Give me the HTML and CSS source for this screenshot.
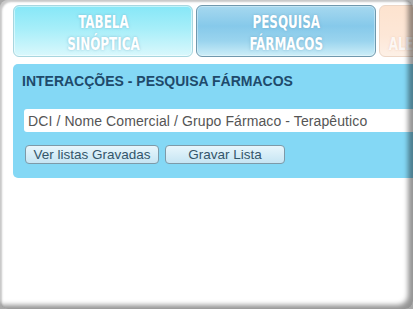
FILE: index.html
```html
<!DOCTYPE html>
<html lang="pt">
<head>
<meta charset="utf-8">
<title>Interacções - Pesquisa Fármacos</title>
<link rel="stylesheet" href="styles.css">
</head>
<body>
<div class="window">
  <div class="content">
    <nav class="tabs">
      <a class="tab tab-synoptic"><span class="tab-label">TABELA<br>SINÓPTICA</span></a>
      <a class="tab tab-search"><span class="tab-label">PESQUISA<br>FÁRMACOS</span></a>
      <a class="tab tab-alt"><span class="tab-label">INTERACÇÕES<br>ALERGIAS E ALIMENTOS</span></a>
    </nav>
    <section class="panel">
      <h1 class="panel-title">INTERACÇÕES - PESQUISA FÁRMACOS</h1>
      <input class="search" type="text" placeholder="DCI / Nome Comercial / Grupo Fármaco - Terapêutico">
      <div class="actions">
        <button class="btn btn-lists">Ver listas Gravadas</button>
        <button class="btn btn-save">Gravar Lista</button>
      </div>
    </section>
  </div>
  <div class="vignette"></div>
</div>
</body>
</html>
```

FILE: styles.css
```css
html, body {
  margin: 0;
  padding: 0;
  background: #fff;
}
.window {
  position: relative;
  width: 413px;
  height: 309px;
  overflow: hidden;
  background: #fff;
}
.content {
  width: 620px;
  padding: 5px 0 0 13px;
}
.tabs {
  display: flex;
  gap: 3px;
}
.tab {
  box-sizing: border-box;
  width: 180px;
  height: 52px;
  flex: none;
  padding-top: 3px;
  border-radius: 6px;
  border: 1px solid #a8d6df;
  display: flex;
  align-items: center;
  justify-content: center;
  text-align: center;
  font-family: "DejaVu Sans Condensed", "DejaVu Sans", sans-serif;
  font-stretch: condensed;
  font-weight: bold;
  font-size: 17px;
  line-height: 22px;
  color: #fff;
  text-shadow: 0 0 3px rgba(90, 150, 180, 0.55);
}
.tab-label {
  display: inline-block;
  white-space: nowrap;
  transform: scaleX(0.78);
}
.tab-synoptic {
  background: linear-gradient(#86e7f7 0%, #a6eef9 45%, #daf8fc 100%);
  box-shadow: inset 0 0 0 1px rgba(255,255,255,0.5);
}
.tab-search {
  border-color: #6f98ad;
  background: linear-gradient(#a6d8ef 0%, #86c9ea 40%, #9ad4ee 70%, #cdeef8 100%);
  box-shadow: inset 0 0 0 1px rgba(255,255,255,0.35);
}
.tab-alt {
  border-color: #ecd6c6;
  background: linear-gradient(#fde3cf 0%, #fde7d7 60%, #fdf0e6 100%);
  color: rgba(255, 255, 255, 0.85);
  text-shadow: 0 0 2px rgba(220, 170, 140, 0.5);
}
.panel {
  box-sizing: border-box;
  width: 580px;
  height: 114px;
  margin-top: 7px;
  padding: 9px 9px 0;
  border-radius: 5px;
  background: #84d8f5;
}
.panel-title {
  margin: 0;
  font-family: "Liberation Sans", Arial, sans-serif;
  font-weight: bold;
  font-size: 14px;
  line-height: 16px;
  color: #1e4a6b;
}
.search {
  display: block;
  box-sizing: border-box;
  width: 560px;
  height: 23px;
  margin: 20px 0 0 2px;
  padding: 0 4px;
  border: none;
  border-radius: 3px;
  background: #fff;
  font-family: "Liberation Sans", Arial, sans-serif;
  font-size: 14px;
  letter-spacing: 0.1px;
  color: #555;
  outline: none;
}
.search::placeholder {
  color: #555;
  opacity: 1;
}
.actions {
  display: flex;
  gap: 6px;
  margin: 13px 0 0 3px;
}
.btn {
  box-sizing: border-box;
  height: 19px;
  padding: 0 5px;
  border: 1px solid #7e9aa8;
  border-radius: 4px;
  background: linear-gradient(#e8f6fc, #c6e5f3);
  font-family: "Liberation Sans", Arial, sans-serif;
  font-size: 13.5px;
  line-height: 17px;
  color: #34566a;
}
.btn-lists {
  width: 134px;
}
.btn-save {
  width: 120px;
}
.vignette {
  position: absolute;
  inset: 0;
  pointer-events: none;
  border-radius: 8px;
  box-shadow:
    inset 3px 3px 2px -1px rgba(0, 0, 0, 0.22),
    inset -7px -6px 5px -2px rgba(0, 0, 0, 0.42),
    0 0 0 8px #a8a8a8;
}
```
